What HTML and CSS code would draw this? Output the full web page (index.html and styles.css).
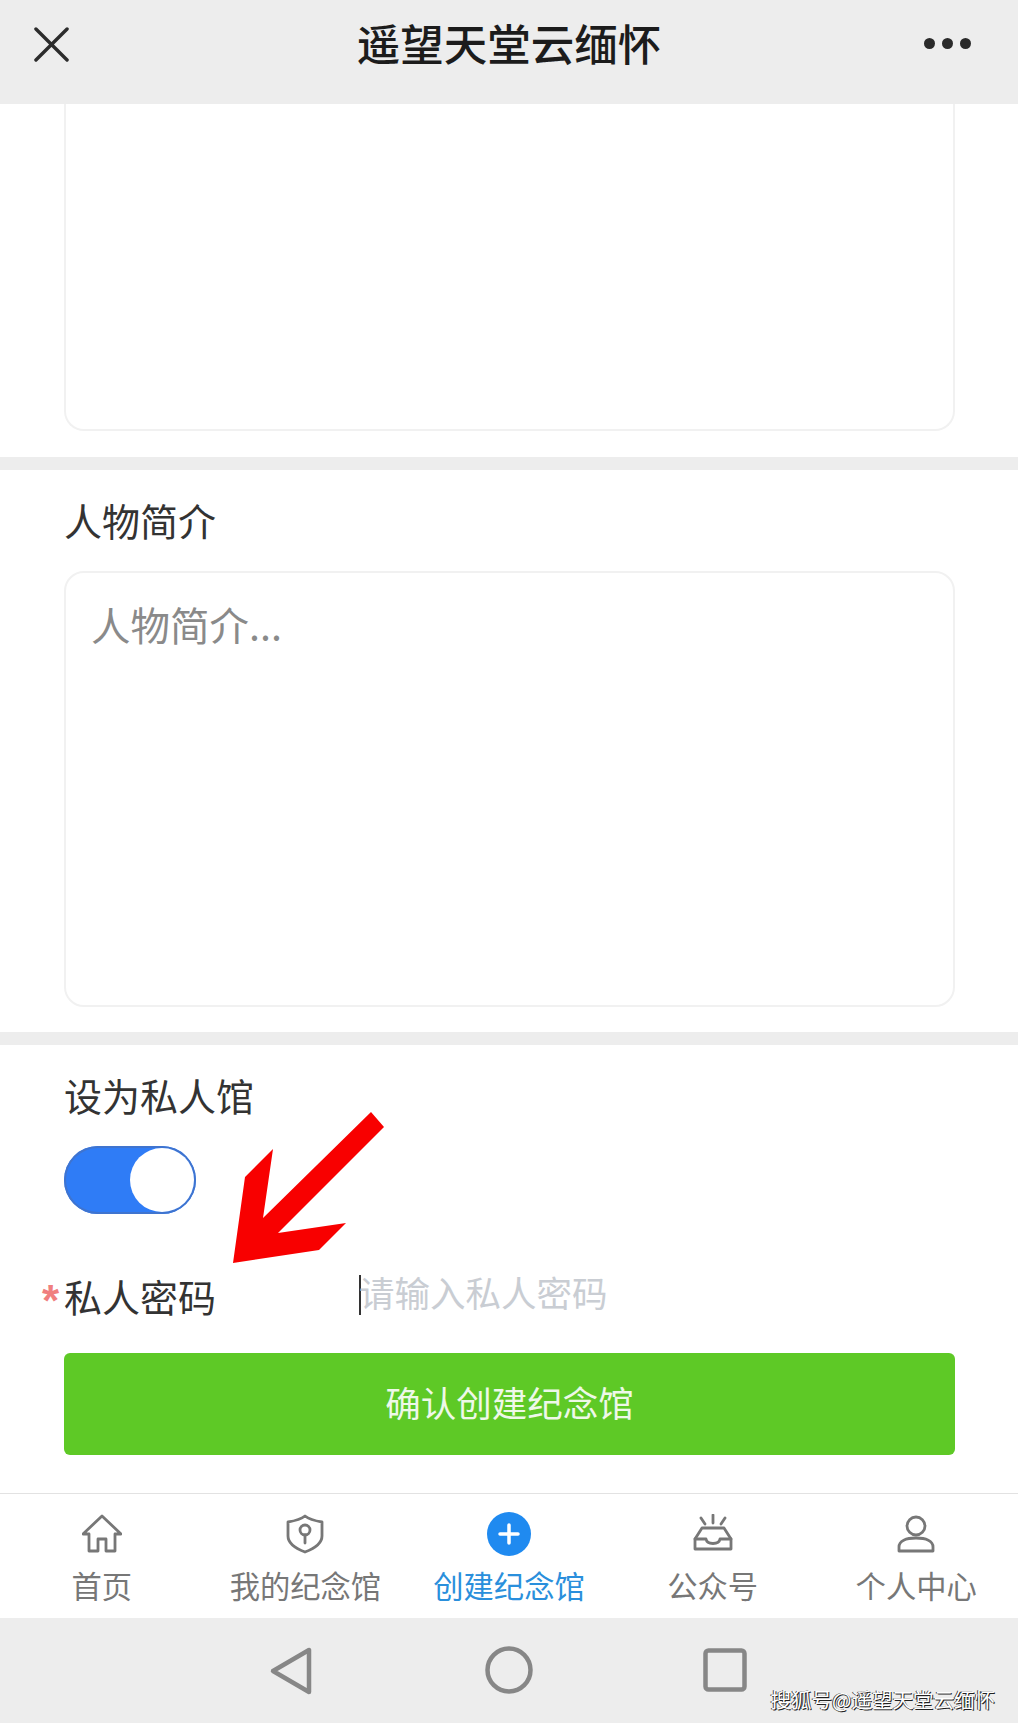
FILE: index.html
```html
<!DOCTYPE html>
<html lang="zh-CN">
<head>
<meta charset="utf-8">
<title>遥望天堂云缅怀</title>
<link rel="stylesheet" href="styles.css">
</head>
<body>
<div class="page">
  <header class="topbar">
    <svg class="close-icon" viewBox="0 0 36 36"><path d="M2 2 L34 34 M34 2 L2 34"/></svg>
    <h1 class="title">遥望天堂云缅怀</h1>
    <div class="dots"><span class="dot"></span><span class="dot"></span><span class="dot"></span></div>
  </header>

  <main class="content">
    <section class="section section-clipped">
      <div class="card card-clipped"></div>
    </section>
    <section class="section section-intro">
      <div class="label">人物简介</div>
      <div class="card card-intro"><span class="hint">人物简介...</span></div>
    </section>
    <section class="section section-private">
      <div class="label">设为私人馆</div>
      <div class="toggle"><span class="knob"></span></div>
      <div class="password-row">
        <span class="star">*</span>
        <span class="label password-label">私人密码</span>
        <span class="cursor"></span>
        <span class="password-hint">请输入私人密码</span>
      </div>
      <button class="submit">确认创建纪念馆</button>
    </section>
  </main>

  <nav class="tabs">
    <div class="tab">
      <svg class="tab-icon" viewBox="0 0 40 40"><path d="M20 2 L39 20 H33 V37 H24 V25 H16 V37 H7 V20 H1 Z"/></svg>
      <span class="tab-text">首页</span>
    </div>
    <div class="tab">
      <svg class="tab-icon" viewBox="0 0 40 40"><path d="M20 2 C25 6 31 7 37 8 V22 C37 30 28 35 20 38 C12 35 3 30 3 22 V8 C9 7 15 6 20 2 Z"/><circle cx="20" cy="16" r="5"/><path d="M20 21 V29"/></svg>
      <span class="tab-text">我的纪念馆</span>
    </div>
    <div class="tab tab-active">
      <svg class="tab-plus" viewBox="0 0 44 44"><circle class="plus-bg" cx="22" cy="22" r="22"/><path class="plus-mark" d="M22 13 V31 M13 22 H31"/></svg>
      <span class="tab-text">创建纪念馆</span>
    </div>
    <div class="tab">
      <svg class="tab-icon" viewBox="0 0 40 40"><path d="M9 14 H31 L38 25 V35 H2 V25 Z"/><path d="M2 25 H13 C14 31 26 31 27 25 H38"/><path d="M20 1 V9 M8 4 L12 10 M32 4 L28 10"/></svg>
      <span class="tab-text">公众号</span>
    </div>
    <div class="tab">
      <svg class="tab-icon" viewBox="0 0 40 40"><circle cx="20" cy="12" r="9"/><path d="M3 37 V33 C3 27 10 24 20 24 C30 24 37 27 37 33 V37 Z"/></svg>
      <span class="tab-text">个人中心</span>
    </div>
  </nav>

  <footer class="sysbar">
    <svg class="sys-icon sys-back" viewBox="0 0 44 50"><path d="M40 4 V46 L4 25 Z"/></svg>
    <svg class="sys-icon sys-home" viewBox="0 0 48 48"><circle cx="24" cy="24" r="21.500"/></svg>
    <svg class="sys-icon sys-recent" viewBox="0 0 44 44"><rect x="2.500" y="2.500" width="39" height="39" rx="3"/></svg>
    <span class="watermark">搜狐号@遥望天堂云缅怀</span>
  </footer>

  <svg class="arrow" viewBox="0 0 1018 1723"><path d="M233 1263 L245 1177 L273 1149 L263 1218 L371 1112 L384 1127 L278 1233 L346 1223 L319 1250 Z"/></svg>
</div>
</body>
</html>
```
FILE: styles.css
```css
* { box-sizing: border-box; }
html, body { margin: 0; padding: 0; }
body {
  background: #fff;
  font-family: "Noto Sans CJK SC", "Noto Sans", sans-serif;
  color: #333;
}
.page {
  position: relative;
  width: 1018px;
  height: 1723px;
  display: flex;
  flex-direction: column;
  overflow: hidden;
}

/* top bar */
.topbar {
  flex: 0 0 104px;
  background: #ededed;
  display: grid;
  grid-template-columns: 1fr auto 1fr;
  align-items: center;
  padding: 0 34px 18px;
}
.close-icon {
  width: 35px;
  height: 35px;
  margin-top: 2px;
  fill: none;
  stroke: #2c2c2c;
  stroke-width: 3.500;
  stroke-linecap: round;
}
.title {
  margin: 0;
  font-size: 43.500px;
  line-height: 60px;
  font-weight: 500;
  color: #1c1c1c;
}
.dots { justify-self: end; display: flex; gap: 7px; margin-right: 13px; }
.dot { width: 11px; height: 11px; border-radius: 50%; background: #2a2a2a; }

/* form */
.content { flex: 1; display: flex; flex-direction: column; gap: 13px; background: #ededed; }
.section { background: #fff; padding: 0 63px 0 64px; }
.section-clipped { height: 353px; }
.section-intro { height: 562px; padding-top: 27px; }
.section-private { flex: 1; padding-top: 27px; }
.card {
  border: 2px solid #f1f1f1;
  border-radius: 20px;
  background: #fff;
}
.card-clipped { height: 327px; border-top: 0; border-radius: 0 0 20px 20px; }
.card-intro { height: 436px; margin-top: 28px; padding: 23px 25px; }
.label { font-size: 38px; line-height: 46px; color: #333; }
.hint { font-size: 39.500px; line-height: 56px; color: #8a8a8a; }

.toggle {
  width: 132px;
  height: 68px;
  margin-top: 28px;
  border-radius: 34px;
  background: #2f7cf6;
  box-shadow: inset 0 0 0 2px #3f74cf;
  display: flex;
  justify-content: flex-end;
  padding: 2px;
}
.knob { width: 64px; height: 64px; border-radius: 50%; background: #fff; }

.password-row {
  height: 60px;
  margin: 52px 0 0 -21px;
  display: flex;
  align-items: center;
}
.star {
  width: 21px;
  font-family: "Liberation Sans", sans-serif;
  font-size: 44px;
  font-weight: 700;
  line-height: 46px;
  height: 36px;
  margin-left: -1px;
  margin-right: 1px;
  color: #f07f7f;
}
.password-label { width: 295px; }
.cursor { width: 2px; height: 40px; margin-top: -3px; background: #333; }
.password-hint { font-size: 35.500px; line-height: 46px; margin: -8px 0 0 -2px; color: #c9cdd3; }

.submit {
  display: block;
  width: 100%;
  height: 102px;
  margin-top: 27px;
  border: 0;
  border-radius: 6px;
  padding: 0 0 6px;
  background: #5ec926;
  color: #eef8e8;
  font: inherit;
  font-size: 35.500px;
  font-weight: 400;
}

/* tab bar */
.tabs {
  flex: 0 0 125px;
  display: grid;
  grid-template-columns: repeat(5, 1fr);
  background: #fff;
  border-top: 1px solid #e2e2e2;
}
.tab {
  display: flex;
  flex-direction: column;
  align-items: center;
  padding-top: 20px;
}
.tab-icon {
  width: 40px;
  height: 40px;
  fill: none;
  stroke: #777;
  stroke-width: 2.800;
  stroke-linejoin: round;
  stroke-linecap: round;
}
.tab-plus { width: 44px; height: 44px; margin: -2px 0; }
.plus-bg { fill: #1f8af0; }
.plus-mark { fill: none; stroke: #fff; stroke-width: 3.500; stroke-linecap: round; }
.tab-text { margin-top: 11px; font-size: 30.300px; line-height: 40px; color: #777; }
.tab-active .tab-text { color: #2a8fdc; }

/* system bar */
.sysbar {
  position: relative;
  flex: 0 0 105px;
  background: #ededed;
  display: flex;
  align-items: flex-start;
  padding: 28px 0 0 269px;
}
.sys-icon {
  fill: none;
  stroke: #878787;
  stroke-width: 4.500;
  stroke-linejoin: round;
}
.sys-back { width: 44px; height: 50px; }
.sys-home { width: 48px; height: 48px; margin-left: 172px; }
.sys-recent { width: 44px; height: 44px; margin: 2px 0 0 170px; }
.watermark {
  position: absolute;
  right: 23px;
  bottom: 11px;
  font-size: 20.500px;
  line-height: 26px;
  color: #fff;
  text-shadow: 1px 1px 0 #222, -1px 0 0 #444;
}

/* annotation arrow */
.arrow {
  position: absolute;
  left: 0;
  top: 0;
  width: 1018px;
  height: 1723px;
  pointer-events: none;
}
.arrow path { fill: #f80000; }
```
